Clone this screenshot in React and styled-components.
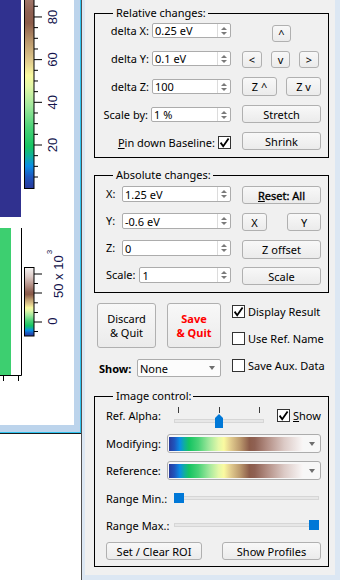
import styled, { createGlobalStyle } from "styled-components"

// colour map shared by the plot colour bars and the combo previews
const colorMap = [
  [0, "#283a9c"],
  [0.04, "#1f55bd"],
  [0.08, "#0b8de5"],
  [0.115, "#0fae9e"],
  [0.15, "#15c462"],
  [0.22, "#4ad277"],
  [0.3, "#a2e89d"],
  [0.37, "#e4f8a8"],
  [0.41, "#fafaa0"],
  [0.46, "#e2cc8e"],
  [0.53, "#bc9a6e"],
  [0.6, "#8c5c4a"],
  [0.64, "#8f6153"],
  [0.73, "#b28d83"],
  [0.86, "#dccac6"],
  [1, "#f9f7f7"],
]

const mapGradient = `linear-gradient(to right, ${colorMap
  .map(([at, c]) => `${c} ${at * 100}%`)
  .join(", ")})`

const barOneTicks = Array.from({ length: 17 }, (_, i) => i - 3).map((k) => ({
  y: 145 - k * 10.67,
  major: k % 4 === 0,
}))
const barOneLabels = [
  [145, "20"],
  [102.3, "40"],
  [59.6, "60"],
  [17, "80"],
]
const barTwoTicks = [
  [274, true],
  [283.5, false],
  [293, true],
  [302.8, false],
  [312.5, false],
  [322, true],
  [331.5, false],
]

const PlotCanvas = () => (
  <PlotSvg width="74" height="425" viewBox="0 0 74 425">
    <defs>
      <linearGradient id="barOne" gradientUnits="userSpaceOnUse" x1="0" y1="188" x2="0" y2="-87">
        {colorMap.map(([at, c]) => (
          <stop key={at} offset={at} stopColor={c} />
        ))}
      </linearGradient>
      <linearGradient id="barTwo" gradientUnits="userSpaceOnUse" x1="0" y1="336" x2="0" y2="267">
        {colorMap.map(([at, c]) => (
          <stop key={at} offset={at} stopColor={c} />
        ))}
      </linearGradient>
    </defs>

    <rect x="0" y="0" width="21" height="217" fill="#30318f" />
    <rect x="24.5" y="-1" width="9.5" height="189.5" fill="url(#barOne)" stroke="#000" />
    {barOneTicks.map((t) => (
      <line key={t.y} x1="34" x2={t.major ? 42 : 38} y1={t.y} y2={t.y} stroke="#000" />
    ))}
    {barOneLabels.map(([y, txt]) => (
      <text key={txt} x="57" y={y} transform={`rotate(-90 57 ${y})`} textAnchor="middle" fontFamily="Liberation Sans, sans-serif" fontSize="13" fill="#14144c">
        {txt}
      </text>
    ))}

    <rect x="0" y="228" width="11" height="147" fill="#3dcf70" />
    <path d="M21.5 228 V375.5 H0 M3.5 375.5 V381 M18.5 375.5 V381" fill="none" stroke="#000" />

    <rect x="24.5" y="267.5" width="9.5" height="68.5" fill="url(#barTwo)" stroke="#000" />
    {barTwoTicks.map(([y, major]) => (
      <line key={y} x1="34" x2={major ? 42 : 38} y1={y} y2={y} stroke="#000" />
    ))}
    <text x="57" y="321" transform="rotate(-90 57 321)" textAnchor="middle" fontFamily="Liberation Sans, sans-serif" fontSize="13" fill="#14144c">
      0
    </text>
    <text x="63" y="298" transform="rotate(-90 63 298)" fontFamily="Liberation Sans, sans-serif" fontSize="13" fill="#14144c">
      50 x 10
      <tspan dy="-11" dx="1" fontSize="8">3</tspan>
    </text>
  </PlotSvg>
)

const Check = () => (
  <svg width="11" height="11" viewBox="0 0 11 11">
    <path d="M1.6 5.6 L4.2 9.2 L9.6 1.4" fill="none" stroke="#000" strokeWidth="1.8" />
  </svg>
)

const Spin = ({ value, width, height }) => (
  <SpinField $w={width} $h={height}>
    <SpinValue>{value}</SpinValue>
    <SpinButtons>
      <ArrowUp />
      <ArrowDown />
    </SpinButtons>
  </SpinField>
)

const Tick = ({ checked }) => <CheckBox>{checked && <Check />}</CheckBox>

const App = () => {
  return (
    <>
      <GlobalStyle />
      <Screen>
        <LeftSide>
          <PlotFrame>
            <PlotWindow>
              <PlotCanvas />
            </PlotWindow>
          </PlotFrame>
        </LeftSide>

        <RightSide>
          <Panel>
            <Group>
              <Legend>Relative changes:</Legend>
              <GroupBody $pad="3px 7px 7px 6px">
                <TwoCols>
                  <FieldColumn>
                    <FieldRow>
                      <FieldLabel>delta X:</FieldLabel>
                      <Spin value="0.25 eV" width={79} />
                    </FieldRow>
                    <FieldRow>
                      <FieldLabel>delta Y:</FieldLabel>
                      <Spin value="0.1 eV" width={79} />
                    </FieldRow>
                    <FieldRow>
                      <FieldLabel>delta Z:</FieldLabel>
                      <Spin value="100" width={79} />
                    </FieldRow>
                    <FieldRow>
                      <FieldLabel>Scale by:</FieldLabel>
                      <Spin value="1 %" width={80} />
                    </FieldRow>
                    <FieldRow>
                      <FieldLabel>
                        <u>P</u>in down Baseline:
                      </FieldLabel>
                      <Tick checked />
                    </FieldRow>
                  </FieldColumn>
                  <ButtonColumn>
                    <NudgeRow $center>
                      <Btn $w={19} $h={17}>^</Btn>
                    </NudgeRow>
                    <NudgeRow $pr={2}>
                      <Btn $w={20} $h={17}>&lt;</Btn>
                      <Btn $w={19} $h={17}>v</Btn>
                      <Btn $w={20} $h={17}>&gt;</Btn>
                    </NudgeRow>
                    <NudgeRow>
                      <Btn $w={35} $h={19}>Z ^</Btn>
                      <Btn $w={35} $h={19}>Z v</Btn>
                    </NudgeRow>
                    <Btn>Stretch</Btn>
                    <Btn>Shrink</Btn>
                  </ButtonColumn>
                </TwoCols>
              </GroupBody>
            </Group>

            <Group $gap={10}>
              <Legend>Absolute changes:</Legend>
              <GroupBody $pad="4px 7px 7px 11px">
                <AbsGrid>
                  <AbsField>
                    <AbsLabel>X:</AbsLabel>
                    <Spin value="1.25 eV" height={16} />
                  </AbsField>
                  <Btn $strong>
                    <u>R</u>eset: All
                  </Btn>
                  <AbsField>
                    <AbsLabel>Y:</AbsLabel>
                    <Spin value="-0.6 eV" height={16} />
                  </AbsField>
                  <NudgeRow>
                    <Btn $w={25}>X</Btn>
                    <Btn $w={34}>Y</Btn>
                  </NudgeRow>
                  <AbsField>
                    <AbsLabel>Z:</AbsLabel>
                    <Spin value="0" height={16} />
                  </AbsField>
                  <Btn $h={19}>Z offset</Btn>
                  <AbsField>
                    <AbsLabel>Scale:</AbsLabel>
                    <Spin value="1" height={16} />
                  </AbsField>
                  <Btn>Scale</Btn>
                </AbsGrid>
              </GroupBody>
            </Group>

            <Actions>
              <ActionMain>
                <QuitRow>
                  <QuitButton $w={59}>
                    Discard
                    <br />
                    &amp; Quit
                  </QuitButton>
                  <QuitButton $w={54} $danger>
                    Save
                    <br />
                    &amp; Quit
                  </QuitButton>
                </QuitRow>
                <ShowRow>
                  <ShowLabel>Show:</ShowLabel>
                  <Select>
                    <SelectText>None</SelectText>
                    <DropArrow />
                  </Select>
                </ShowRow>
              </ActionMain>
              <OptionList>
                <Option>
                  <Tick checked />
                  Display Result
                </Option>
                <Option>
                  <Tick />
                  Use Ref. Name
                </Option>
                <Option>
                  <Tick />
                  Save Aux. Data
                </Option>
              </OptionList>
            </Actions>

            <Group $gap={12}>
              <Legend>Image control:</Legend>
              <ImageBody>
                <ControlRow $h={21}>
                  <RowLabel>Ref. Alpha:</RowLabel>
                  <AlphaSlider>
                    <TickRow>
                      <SliderTick />
                      <SliderTick />
                      <SliderTick />
                    </TickRow>
                    <AlphaTrack />
                    <AlphaThumb $pos={0.5} />
                  </AlphaSlider>
                  <ShowOption>
                    <Tick checked />
                    <span>
                      <u>S</u>how
                    </span>
                  </ShowOption>
                </ControlRow>
                <ControlRow $h={19}>
                  <RowLabel>Modifying:</RowLabel>
                  <MapSelect>
                    <MapSwatch />
                    <DropArrow />
                  </MapSelect>
                </ControlRow>
                <ControlRow $h={19}>
                  <RowLabel>Reference:</RowLabel>
                  <MapSelect>
                    <MapSwatch />
                    <DropArrow />
                  </MapSelect>
                </ControlRow>
                <ControlRow $h={20}>
                  <RowLabel>Range Min.:</RowLabel>
                  <RangeSlider>
                    <RangeTrack />
                    <RangeThumb $pos={0} />
                  </RangeSlider>
                </ControlRow>
                <ControlRow $h={18}>
                  <RowLabel>Range Max.:</RowLabel>
                  <RangeSlider>
                    <RangeTrack />
                    <RangeThumb $pos={1} />
                  </RangeSlider>
                </ControlRow>
                <BottomButtons>
                  <Btn $w={96}>Set / Clear ROI</Btn>
                  <Btn $w={99}>Show Profiles</Btn>
                </BottomButtons>
              </ImageBody>
            </Group>
          </Panel>
        </RightSide>
      </Screen>
    </>
  )
}

//styling starts----------------------------------------
const PanelGray = "#f0f0f0"
const ThumbBlue = "#0078d7"

const GlobalStyle = createGlobalStyle`
html, body {
  margin: 0;
  padding: 0;
  background: #ffffff;
}
body {
  font-family: "Noto Sans", "Open Sans", sans-serif;
  font-size: 11px;
  color: #000;
}
`

const Screen = styled.div`
display: flex;
width: 340px;
height: 580px;
overflow: hidden;
`

const LeftSide = styled.div`
flex-shrink: 0;
width: 81px;
border-right: 1px solid #505050;
background: #fff;
`

const PlotFrame = styled.div`
border-bottom: 1px solid #1c1c1c;
`

const PlotWindow = styled.div`
background: #bcd4ec;
border-right: 1px solid #2fc3ef;
border-bottom: 1px solid #2fc3ef;
padding: 0 6px 7px 0;
`

const PlotSvg = styled.svg`
display: block;
background: #fff;
`

const RightSide = styled.div`
flex: 1;
display: flex;
padding: 0 5px 5px 3px;
background: #dce7f3;
`

const Panel = styled.div`
flex: 1;
display: flex;
flex-direction: column;
background: ${PanelGray};
padding: 6px 6px 0 9px;
`

const Group = styled.fieldset`
margin: ${(p) => p.$gap || 0}px 0 0;
padding: 0;
border: 1px solid #000;
min-width: 0;
`

const Legend = styled.legend`
margin-left: 18px;
padding: 0 2px 0 3px;
line-height: 14px;
`

const GroupBody = styled.div`
padding: ${(p) => p.$pad};
`

const TwoCols = styled.div`
display: grid;
grid-template-columns: 1fr 79px;
column-gap: 11px;
`

const FieldColumn = styled.div`
display: flex;
flex-direction: column;
gap: 13px;
`

const FieldRow = styled.div`
display: flex;
align-items: center;
justify-content: flex-end;
gap: 3px;
height: 15px;
`

const FieldLabel = styled.span`
white-space: nowrap;
`

const ButtonColumn = styled.div`
display: flex;
flex-direction: column;
gap: 9px;
padding-top: 2px;
`

const NudgeRow = styled.div`
display: flex;
justify-content: ${(p) => (p.$center ? "center" : "space-between")};
padding-right: ${(p) => p.$pr || 0}px;
`

const Btn = styled.button`
box-sizing: border-box;
width: ${(p) => (p.$w ? `${p.$w}px` : "100%")};
height: ${(p) => p.$h || 18}px;
padding: 0;
font-family: inherit;
font-size: 11px;
font-weight: 400;
-webkit-text-stroke: ${(p) => (p.$strong ? "0.35px #000" : "0")};
line-height: 1;
color: #000;
border: 1px solid #b0b0b0;
border-radius: 3px;
background: linear-gradient(#f8f8f8, #ebebeb);
white-space: nowrap;
`

const SpinField = styled.div`
display: flex;
box-sizing: border-box;
flex: ${(p) => (p.$w ? "none" : 1)};
width: ${(p) => (p.$w ? `${p.$w}px` : "auto")};
height: ${(p) => p.$h || 15}px;
border: 1px solid #acacac;
border-radius: 2px;
background: #fff;
`

const SpinValue = styled.span`
flex: 1;
display: flex;
align-items: center;
padding-left: 2px;
white-space: nowrap;
overflow: hidden;
`

const SpinButtons = styled.div`
width: 12px;
border-left: 1px solid #dcdcdc;
display: flex;
flex-direction: column;
align-items: center;
justify-content: center;
gap: 2px;
`

const ArrowUp = styled.span`
width: 0;
height: 0;
border-left: 3px solid transparent;
border-right: 3px solid transparent;
border-bottom: 3px solid #7a7a7a;
`

const ArrowDown = styled.span`
width: 0;
height: 0;
border-left: 3px solid transparent;
border-right: 3px solid transparent;
border-top: 3px solid #7a7a7a;
`

const CheckBox = styled.span`
flex-shrink: 0;
display: flex;
align-items: center;
justify-content: center;
box-sizing: border-box;
width: 13px;
height: 13px;
border: 1px solid #333;
background: #fff;
`

const AbsGrid = styled.div`
display: grid;
grid-template-columns: 1fr 79px;
grid-auto-rows: 18px;
column-gap: 11px;
row-gap: 9px;
`

const AbsField = styled.div`
display: flex;
align-items: flex-start;
gap: 4px;
`

const AbsLabel = styled(FieldLabel)`
min-width: 12px;
line-height: 16px;
`

const Actions = styled.div`
display: flex;
margin: 10px 0 0 3px;
`

const ActionMain = styled.div`
display: flex;
flex-direction: column;
gap: 11px;
width: 124px;
`

const QuitRow = styled.div`
display: flex;
gap: 11px;
`

const QuitButton = styled(Btn)`
height: 45px;
line-height: 14px;
color: ${(p) => (p.$danger ? "#ff0000" : "#000")};
font-weight: ${(p) => (p.$danger ? 700 : 400)};
`

const ShowRow = styled.div`
display: flex;
align-items: center;
justify-content: space-between;
padding-left: 2px;
`

const ShowLabel = styled.span`
font-weight: 700;
`

const Select = styled.div`
display: flex;
align-items: center;
box-sizing: border-box;
width: 84px;
height: 18px;
padding-left: 2px;
border: 1px solid #acacac;
border-radius: 2px;
background: #fcfcfc;
`

const SelectText = styled.span`
flex: 1;
`

const DropArrow = styled.span`
margin-left: auto;
margin-right: 5px;
width: 0;
height: 0;
border-left: 3.5px solid transparent;
border-right: 3.5px solid transparent;
border-top: 4px solid #6e6e6e;
`

const OptionList = styled.div`
display: flex;
flex-direction: column;
gap: 14px;
margin: 2px 0 0 11px;
`

const Option = styled.div`
display: flex;
align-items: center;
gap: 3px;
height: 13px;
white-space: nowrap;
`

const ShowOption = styled(Option)`
margin-left: 13px;
`

const ImageBody = styled.div`
display: flex;
flex-direction: column;
gap: 8px;
padding: 2px 7px 6px 11px;
`

const ControlRow = styled.div`
display: flex;
align-items: center;
height: ${(p) => p.$h}px;
`

const RowLabel = styled.span`
flex-shrink: 0;
width: 61px;
white-space: nowrap;
`

const AlphaSlider = styled.div`
position: relative;
align-self: stretch;
width: 90px;
margin-left: 7px;
`

const TickRow = styled.div`
display: flex;
justify-content: space-between;
height: 6px;
margin-top: 2px;
padding: 0 4px;
`

const SliderTick = styled.span`
width: 1px;
background: #3c3c3c;
`

const AlphaTrack = styled.div`
box-sizing: border-box;
height: 4px;
margin-top: 6px;
border: 1px solid #d6d6d6;
background: #e7e7e7;
`

const AlphaThumb = styled.div`
position: absolute;
top: 9px;
left: calc((100% - 8px) * ${(p) => p.$pos});
width: 8px;
height: 14px;
background: ${ThumbBlue};
clip-path: polygon(50% 0, 100% 28%, 100% 100%, 0 100%, 0 28%);
`

const MapSelect = styled.div`
flex: 1;
display: flex;
align-items: center;
box-sizing: border-box;
height: 19px;
padding-left: 1px;
border: 1px solid #acacac;
border-radius: 3px;
background: #f7f7f7;
`

const MapSwatch = styled.div`
width: 134px;
height: 14px;
background: ${mapGradient};
`

const RangeSlider = styled.div`
position: relative;
display: flex;
align-items: center;
align-self: stretch;
width: 145px;
margin-left: 7px;
`

const RangeTrack = styled.div`
flex: 1;
box-sizing: border-box;
height: 4px;
border: 1px solid #d6d6d6;
background: #e7e7e7;
`

const RangeThumb = styled.div`
position: absolute;
top: 50%;
margin-top: -5px;
left: calc((100% - 10px) * ${(p) => p.$pos});
width: 10px;
height: 10px;
background: ${ThumbBlue};
`

const BottomButtons = styled.div`
display: flex;
justify-content: space-between;
`

export default App
